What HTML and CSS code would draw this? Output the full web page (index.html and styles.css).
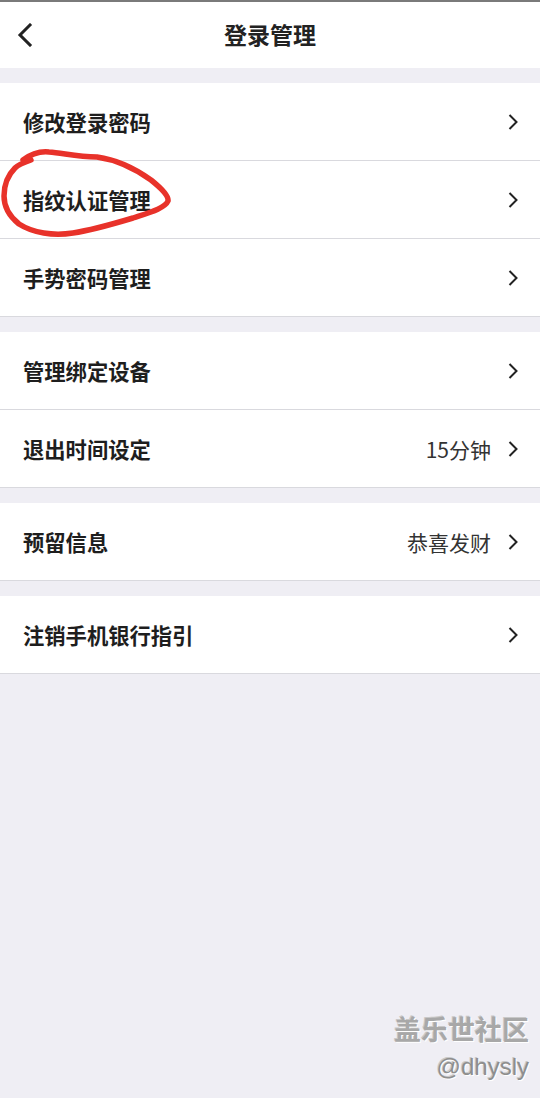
FILE: index.html
```html
<!DOCTYPE html>
<html lang="zh">
<head>
<meta charset="utf-8">
<link rel="stylesheet" href="styles.css">
</head>
<body>
<div class="page">
  <header class="topbar">
    <svg class="back" width="16" height="24" viewBox="0 0 16 24"><path d="M13 2 L3 12 L13 22" fill="none" stroke="#222" stroke-width="3" stroke-linecap="square"/></svg>
    <h1 class="title">登录管理</h1>
  </header>

  <section class="group">
    <div class="row"><span class="label">修改登录密码</span><span class="right"><svg class="chev" viewBox="0 0 10 16"><path d="M1.5 1 L8.5 8 L1.5 15" fill="none" stroke="#222" stroke-width="2"/></svg></span></div>
    <div class="row"><span class="label">指纹认证管理</span><span class="right"><svg class="chev" viewBox="0 0 10 16"><path d="M1.5 1 L8.5 8 L1.5 15" fill="none" stroke="#222" stroke-width="2"/></svg></span></div>
    <div class="row"><span class="label">手势密码管理</span><span class="right"><svg class="chev" viewBox="0 0 10 16"><path d="M1.5 1 L8.5 8 L1.5 15" fill="none" stroke="#222" stroke-width="2"/></svg></span></div>
  </section>

  <section class="group">
    <div class="row"><span class="label">管理绑定设备</span><span class="right"><svg class="chev" viewBox="0 0 10 16"><path d="M1.5 1 L8.5 8 L1.5 15" fill="none" stroke="#222" stroke-width="2"/></svg></span></div>
    <div class="row"><span class="label">退出时间设定</span><span class="right"><span class="value">15分钟</span><svg class="chev" viewBox="0 0 10 16"><path d="M1.5 1 L8.5 8 L1.5 15" fill="none" stroke="#222" stroke-width="2"/></svg></span></div>
  </section>

  <section class="group">
    <div class="row"><span class="label">预留信息</span><span class="right"><span class="value">恭喜发财</span><svg class="chev" viewBox="0 0 10 16"><path d="M1.5 1 L8.5 8 L1.5 15" fill="none" stroke="#222" stroke-width="2"/></svg></span></div>
  </section>

  <section class="group">
    <div class="row"><span class="label">注销手机银行指引</span><span class="right"><svg class="chev" viewBox="0 0 10 16"><path d="M1.5 1 L8.5 8 L1.5 15" fill="none" stroke="#222" stroke-width="2"/></svg></span></div>
  </section>

  <svg class="scribble" width="180" height="95" viewBox="0 0 180 95">
    <path d="M22 12 C30 6 38 3 48 4 C62 5 76 9 96 9 C118 12 136 22 150 32 C160 40 168 48 167 53 C164 60 150 64 132 70 C112 76 92 82 72 85 C52 88 32 85 18 76 C8 68 3 58 3 48 C3 36 8 26 14 20 C18 16 24 14 30 12" fill="none" stroke="#e8322a" stroke-width="5.5" stroke-linecap="round" stroke-linejoin="round"/>
  </svg>

  <div class="watermark">
    <div class="wm-main">盖乐世社区</div>
    <div class="wm-sub">@dhysly</div>
  </div>
</div>
</body>
</html>
```

FILE: styles.css
```css
* { box-sizing: border-box; margin: 0; padding: 0; }
html, body { width: 540px; height: 1098px; }
body {
  background: #efeef4;
  font-family: "Noto Sans CJK SC", "Noto Sans", sans-serif;
  color: #222;
  overflow: hidden;
}
.page {
  position: relative;
  width: 540px;
  height: 1098px;
  border-top: 2px solid #7a7a7a;
}
.topbar {
  position: relative;
  height: 66px;
  background: #fff;
  display: flex;
  align-items: center;
  justify-content: center;
}
.back {
  position: absolute;
  left: 17px;
  top: 21px;
}
.title {
  font-size: 23px;
  font-weight: 700;
  color: #222;
  letter-spacing: 0;
  margin-top: -2px;
}
.group {
  margin-top: 15px;
  background: #fff;
}
.row {
  height: 78px;
  display: flex;
  align-items: center;
  justify-content: space-between;
  padding: 0 22px 0 23px;
  border-bottom: 1px solid #d9d9de;
}
.label {
  font-size: 21.3px;
  font-weight: 700;
  color: #1e1e1e;
}
.right {
  display: flex;
  align-items: center;
}
.value {
  font-size: 21px;
  color: #333;
  margin-right: 17px;
}
.chev {
  width: 10px;
  height: 16px;
}
.scribble {
  position: absolute;
  left: 1px;
  top: 146px;
}
.watermark {
  position: absolute;
  right: 11px;
  top: 1007px;
  text-align: right;
  text-shadow: 1px 1px 0 #fff, -1px -1px 0 #c8c8c8;
}
.wm-main {
  font-size: 27px;
  font-weight: 700;
  line-height: 40px;
  color: #a8a8a8;
}
.wm-sub {
  font-family: "Liberation Sans", Arial, sans-serif;
  font-size: 24px;
  line-height: 36px;
  color: #8e8e8e;
}
```
